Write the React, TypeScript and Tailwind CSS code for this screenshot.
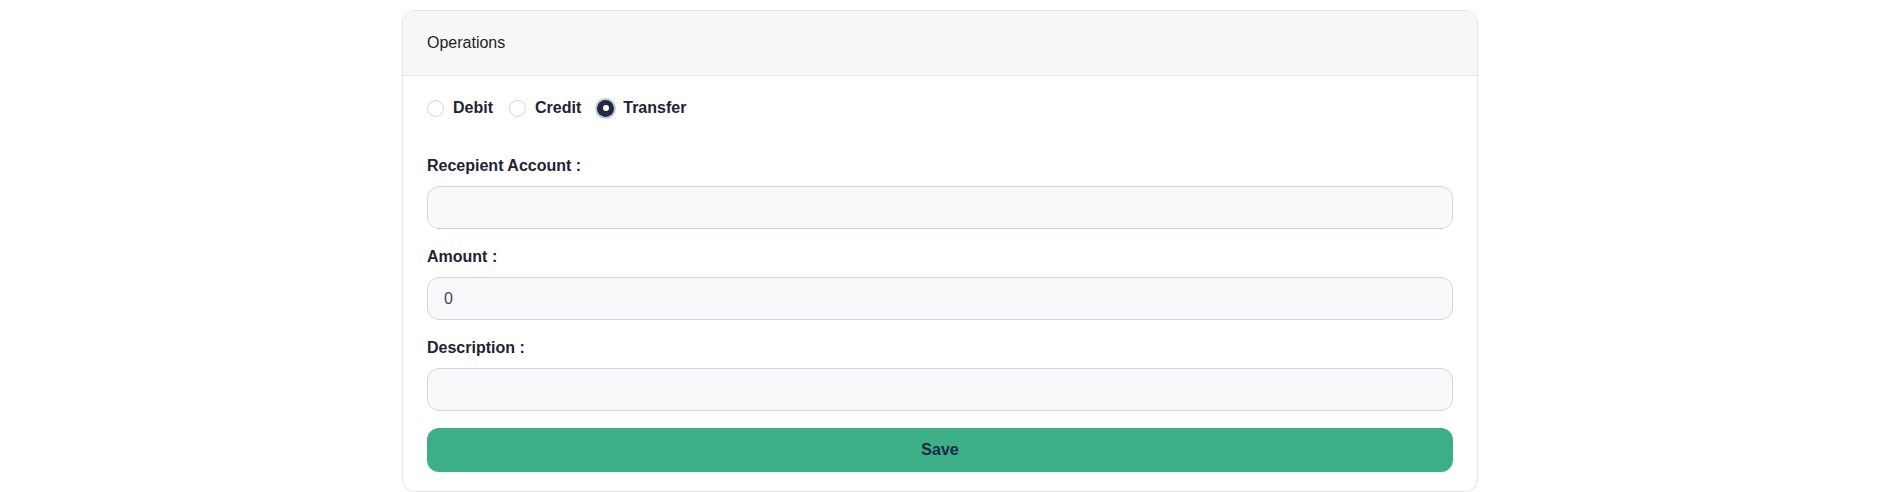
import React, { useState } from 'react';

type Operation = 'Debit' | 'Credit' | 'Transfer';

const operations: Operation[] = ['Debit', 'Credit', 'Transfer'];

const Field: React.FC<{ label: string; value?: string }> = ({ label, value }) => (
  <div className="mb-4">
    <label className="block mb-2 text-base leading-6 font-bold text-[#1e2433]">{label}</label>
    <input
      type="text"
      defaultValue={value}
      className="block w-full h-[43px] rounded-xl border border-[#d3d5da] bg-[#f8f9fb] px-4 text-base text-[#3f4a5a] outline-none"
    />
  </div>
);

const App: React.FC = () => {
  const [operation, setOperation] = useState<Operation>('Transfer');

  return (
    <div className="min-h-screen bg-white flex justify-center pt-[10px] pr-[6px] font-['Liberation_Sans',Arial,sans-serif]">
      <div className="w-[1076px] self-start rounded-xl border border-[#e6e6e6] overflow-hidden">
        <div className="bg-[#f7f7f7] border-b border-[#e6e6e6] px-6 py-5 text-base leading-6 text-[#212529]">
          Operations
        </div>

        <div className="px-6 pt-5 pb-[19px]">
          <div className="flex items-center h-6 gap-4">
            {operations.map((op) => (
              <label key={op} className="flex items-center gap-[9px] cursor-pointer">
                <input
                  type="radio"
                  name="operation"
                  className="sr-only"
                  checked={operation === op}
                  onChange={() => setOperation(op)}
                />
                {operation === op ? (
                  <span className="w-[17px] h-[17px] rounded-full bg-[#1f2a48] ring-2 ring-[#c9cbd1] flex items-center justify-center">
                    <span className="w-[6px] h-[6px] rounded-full bg-white" />
                  </span>
                ) : (
                  <span className="w-[17px] h-[17px] rounded-full border border-[#d3d5da] bg-white" />
                )}
                <span className="text-base leading-6 font-bold text-[#1e2433]">{op}</span>
              </label>
            ))}
          </div>

          <div className="mt-[34px]">
            <Field label="Recepient Account :" />
            <Field label="Amount :" value="0" />
            <Field label="Description :" />
            <button className="w-full h-[44px] mt-px rounded-xl bg-[#3caf87] text-base font-bold text-[#1e2a44]">
              Save
            </button>
          </div>
        </div>
      </div>
    </div>
  );
};

export default App;
